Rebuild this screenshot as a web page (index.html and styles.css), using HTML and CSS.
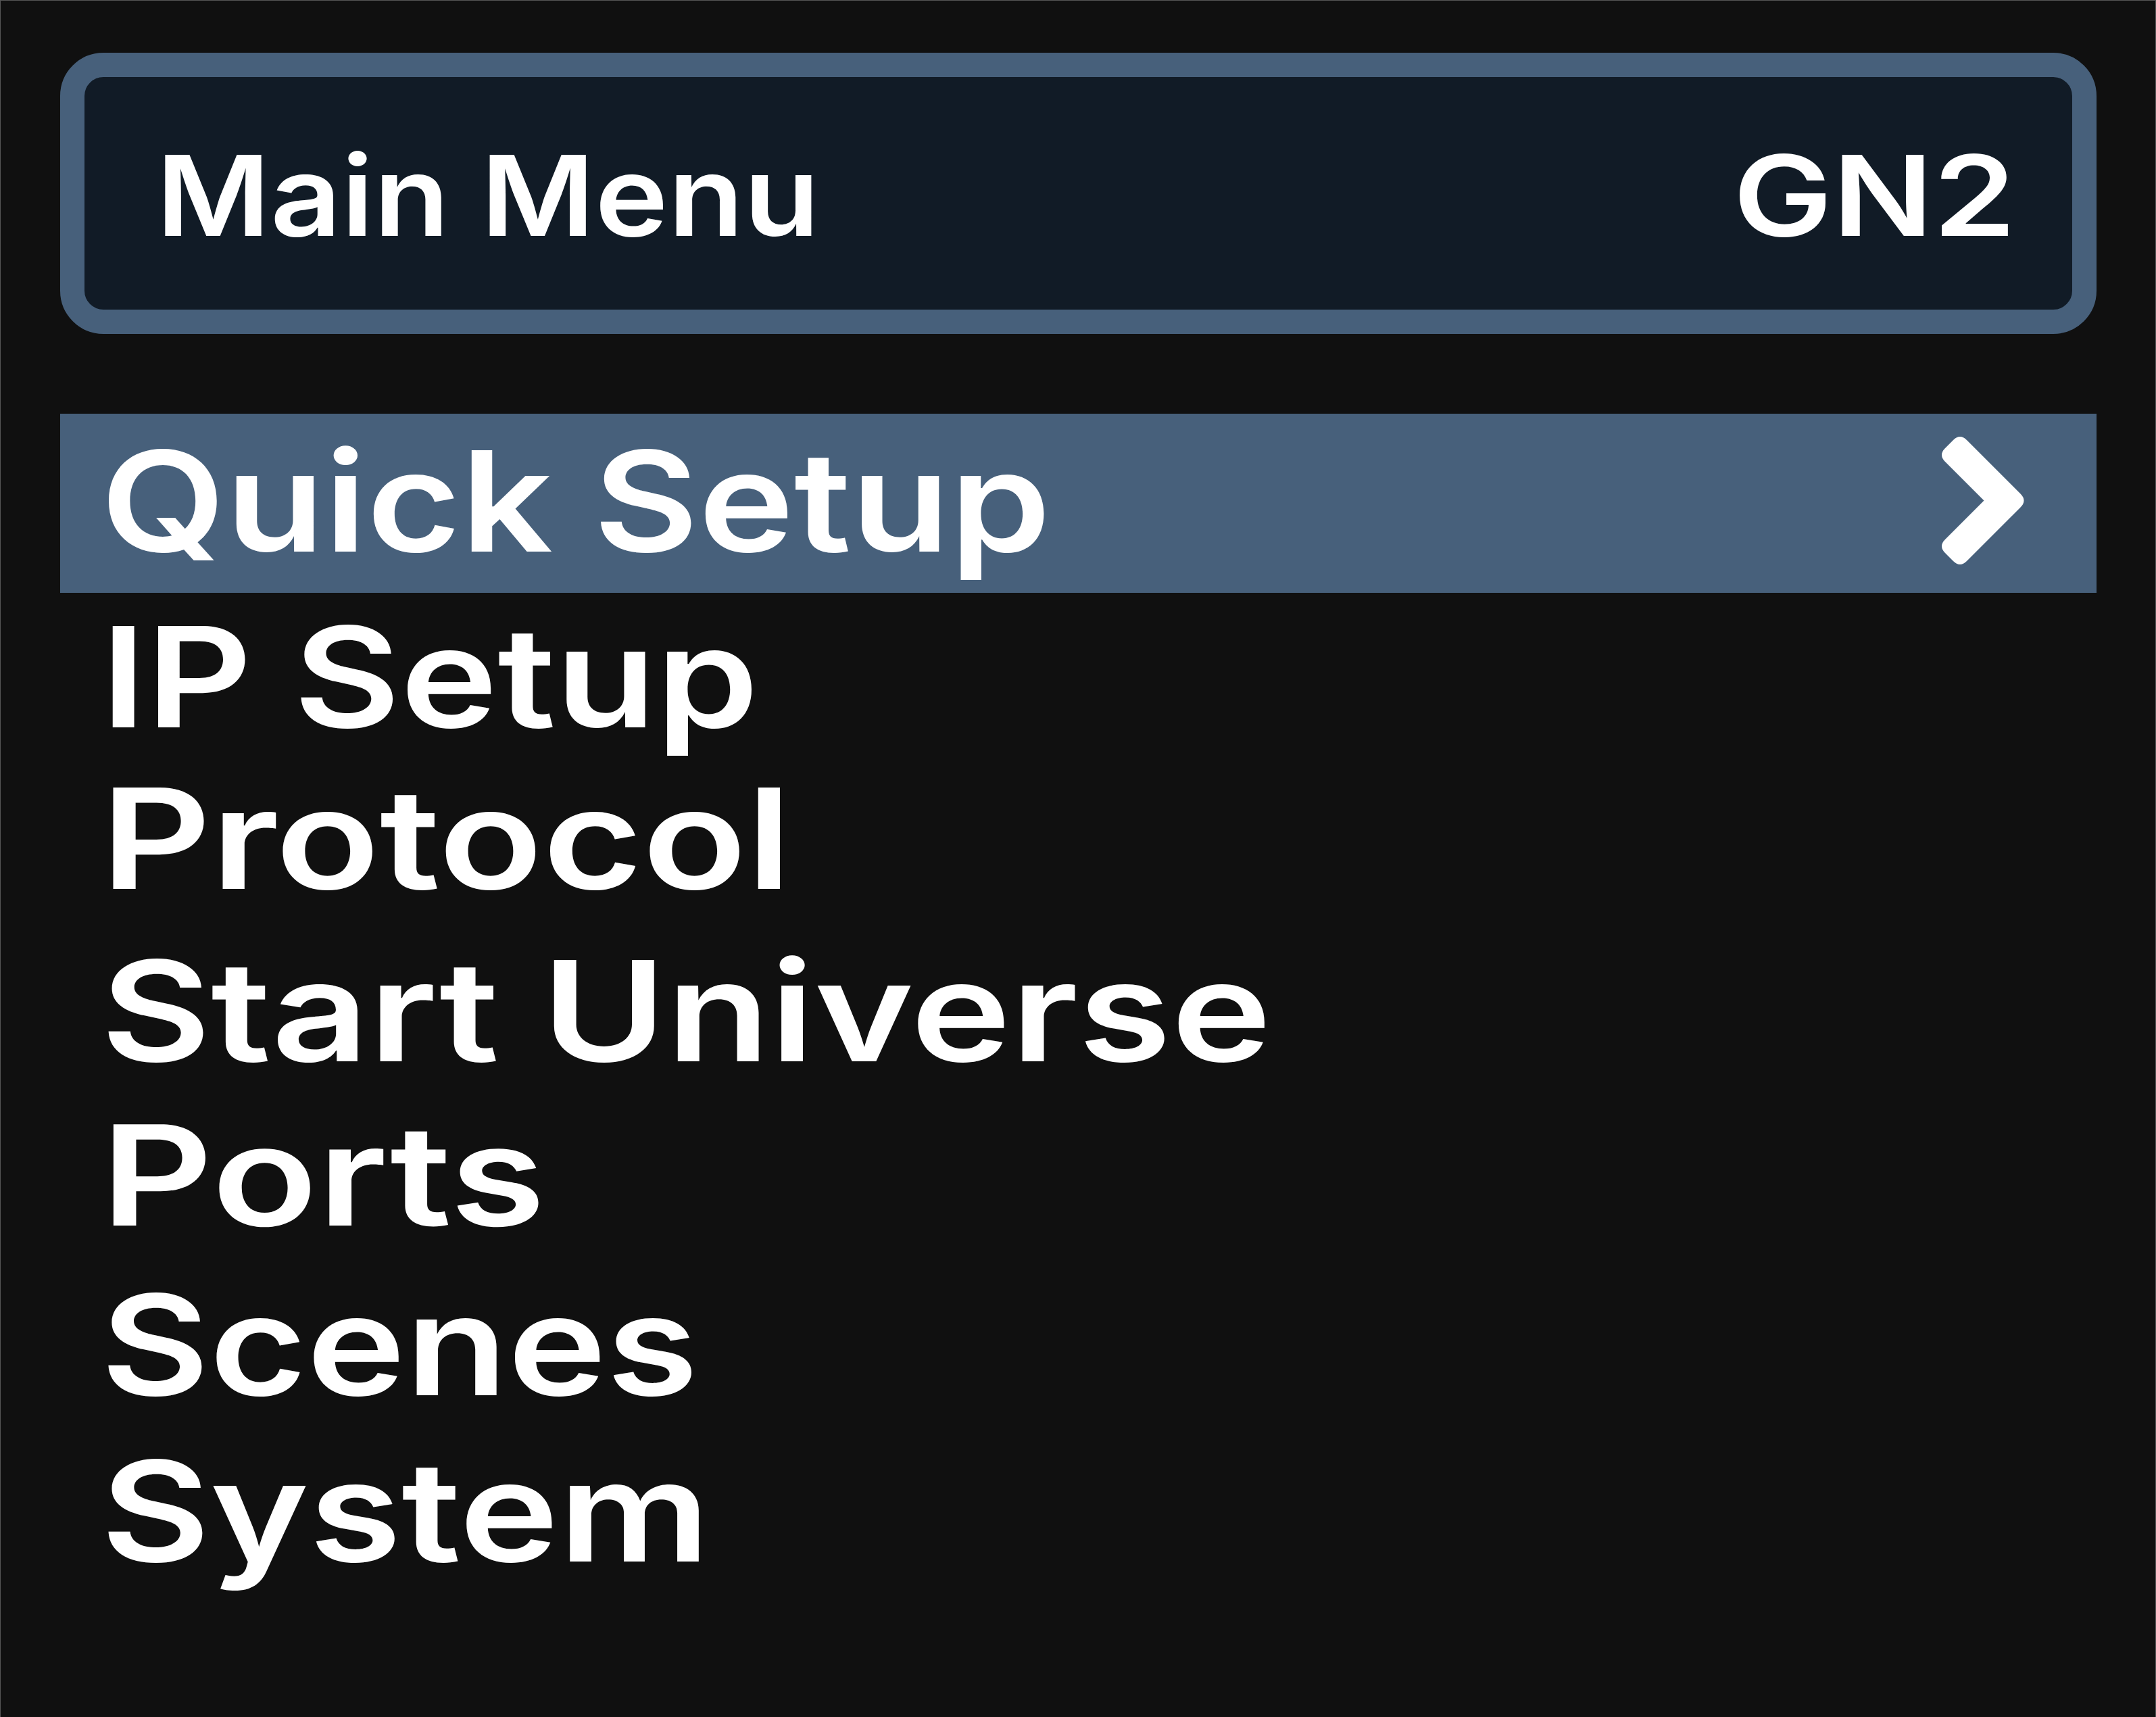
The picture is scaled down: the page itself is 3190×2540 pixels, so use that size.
FILE: index.html
```html
<!DOCTYPE html>
<html lang="en">
  <head>
    <meta charset="UTF-8">
    <title>Main Menu</title>
    <link rel="stylesheet" href="styles.css">
  </head>
  <body>
    <div class="screen">
      <div class="header">
        <span class="header-title title-main">Main Menu</span>
        <span class="header-title title-device">GN2</span>
      </div>
      <div class="menu">
        <div class="menu-item selected">
          <span class="label label-quick">Quick Setup</span>
          <svg class="chevron" viewBox="0 0 122 189" width="122" height="189">
            <path d="M17 5 Q27 -5 37 5 L116.500 84.500 Q126.500 94.500 116.500 104.500 L37 184 Q27 194 17 184 L5 172 Q-5 162 5 152 L62.500 94.500 L5 37 Q-5 27 5 17 Z" fill="#fff"/>
          </svg>
        </div>
        <div class="menu-item"><span class="label label-ip">IP Setup</span></div>
        <div class="menu-item"><span class="label label-protocol">Protocol</span></div>
        <div class="menu-item"><span class="label label-start">Start Universe</span></div>
        <div class="menu-item"><span class="label label-ports">Ports</span></div>
        <div class="menu-item"><span class="label label-scenes">Scenes</span></div>
        <div class="menu-item"><span class="label label-system">System</span></div>
      </div>
    </div>
  </body>
</html>
```

FILE: styles.css
```css
body {
  margin: 0;
  padding: 0;
  background: #101010;
  font-family: Inter, "Liberation Sans", Arial, sans-serif;
  color: #fff;
}

.screen {
  width: 3190px;
  height: 2540px;
  box-sizing: border-box;
  padding: 77px 87px 0 88px;
  overflow: hidden;
  border: 1px solid #555;
  border-bottom: none;
}

.header {
  height: 416px;
  box-sizing: border-box;
  background: #111b26;
  border: 36px solid #47607b;
  border-radius: 64px;
  padding: 6px 83px 0 106px;
  display: flex;
  justify-content: space-between;
  align-items: center;
}

.header-title {
  display: inline-block;
  font-size: 165px;
  font-weight: 600;
  line-height: 1;
}

.title-main {
  transform: scaleX(1.11);
  transform-origin: left center;
}

.title-device {
  transform: scaleX(1.19);
  transform-origin: right center;
}

/* rows are uneven in the original, so the steps are listed one by one */
.menu {
  margin-top: 118px;
  display: grid;
  grid-template-rows: 286px 239px 255px 243px 251px 246px 206px;
}

.menu-item {
  height: 206px;
  padding: 0 60px;
  display: flex;
  justify-content: space-between;
  align-items: center;
  font-size: 206px;
  font-weight: 600;
  line-height: 1;
}

.selected {
  height: 265px;
  box-sizing: border-box;
  padding-bottom: 8px;
  padding-right: 107px;
  background: #47607b;
}

.label {
  display: inline-block;
  transform-origin: left center;
}

.label-quick { transform: scaleX(1.16); }
.label-ip { transform: scaleX(1.18); }
.label-protocol { transform: scaleX(1.23); }
.label-start { transform: scaleX(1.217); }
.label-ports { transform: scaleX(1.25); }
.label-scenes { transform: scaleX(1.20); }
.label-system { transform: scaleX(1.208); }
```
